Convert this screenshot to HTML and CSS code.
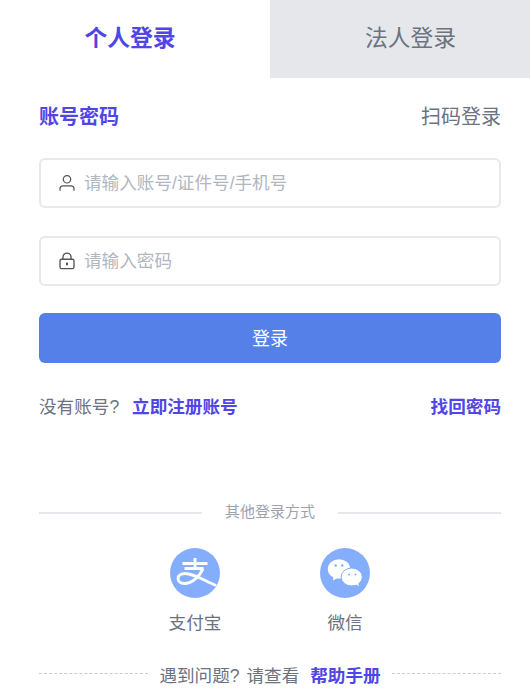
FILE: index.html
```html
<!DOCTYPE html>
<html lang="zh-CN">
  <head>
    <meta charset="UTF-8" />
    <meta name="viewport" content="width=device-width, initial-scale=1.0" />
    <title>登录</title>
    <link rel="stylesheet" href="styles.css">
  </head>
  <body>
    <div class="login-box">
      <!-- 登录类型 -->
      <div class="tabs">
        <div class="tab tab-active">个人登录</div>
        <div class="tab tab-other">法人登录</div>
      </div>

      <div class="login-body">
        <div class="mode-row">
          <span class="mode-active">账号密码</span>
          <span class="mode-other">扫码登录</span>
        </div>

        <div class="field">
          <svg class="field-icon" viewBox="0 0 16 16" fill="none" stroke="#555" stroke-width="1.1">
            <circle cx="8" cy="4.700" r="3.300" />
            <path d="M1.800 14.800v-1.600c0-1.500 1.200-2.600 2.700-2.600h7c1.500 0 2.700 1.100 2.700 2.600v1.600" />
          </svg>
          <span class="placeholder">请输入账号/证件号/手机号</span>
        </div>
        <div class="field">
          <svg class="field-icon" viewBox="0 0 16 16" fill="none" stroke="#555" stroke-width="1.200">
            <rect x="1.800" y="6.400" width="12.400" height="8.400" rx="1.400" />
            <path d="M4.400 6.400V4.600a3.600 3.600 0 0 1 7.200 0v1.800" />
            <path d="M8 9.400v2.400" stroke-width="1.800" />
          </svg>
          <span class="placeholder">请输入密码</span>
        </div>

        <button class="login-btn">登录</button>

        <div class="links">
          <span class="no-account">没有账号? <a class="link register-link">立即注册账号</a></span>
          <a class="link">找回密码</a>
        </div>

        <div class="other-title">
          <span class="line"></span>
          <span>其他登录方式</span>
          <span class="line"></span>
        </div>

        <div class="other-list">
          <div class="other-item">
            <svg class="other-icon" viewBox="0 0 50 50">
              <defs>
                <clipPath id="alipayClip">
                  <circle cx="25" cy="25" r="25" />
                </clipPath>
              </defs>
              <circle cx="25" cy="25" r="25" fill="#84aefb" />
              <g clip-path="url(#alipayClip)" fill="none" stroke="#fff" stroke-width="2.900">
                <path d="M12.500 15.500h25M25 10v10.500M14.500 20.500h19" />
                <path d="M33 20.500C30 28 22 35.500 14.500 35.500 10 35.500 8 33 8 30.500 8 27.500 11 25.500 15 25.500 24 25.500 33 32 46 37.500" />
              </g>
            </svg>
            <span>支付宝</span>
          </div>
          <div class="other-item">
            <svg class="other-icon" viewBox="0 0 50 50">
              <circle cx="25" cy="25" r="25" fill="#84aefb" />
              <ellipse cx="19" cy="21" rx="11.200" ry="9.800" fill="#fff" />
              <path d="M13 28l.3 4.500 4.500-2.800z" fill="#fff" />
              <ellipse cx="31.700" cy="29" rx="10.600" ry="9" fill="#fff" stroke="#84aefb" stroke-width="1" />
              <path d="M36 36l2.500 2.500-.2-4z" fill="#fff" />
              <circle cx="15.700" cy="17.500" r="1.200" fill="#84aefb" />
              <circle cx="22.300" cy="17.500" r="1.200" fill="#84aefb" />
              <circle cx="29" cy="26.500" r="1" fill="#84aefb" />
              <circle cx="35.500" cy="26.500" r="1" fill="#84aefb" />
            </svg>
            <span>微信</span>
          </div>
        </div>

        <div class="help">
          <span class="dash"></span>
          <span class="help-text">遇到问题? 请查看</span>
          <a class="link">帮助手册</a>
          <span class="dash"></span>
        </div>
      </div>
    </div>
  </body>
</html>
```

FILE: styles.css
```css
* {
  margin: 0;
  padding: 0;
  box-sizing: border-box;
}

body {
  background-color: #fff;
  font-family: "Liberation Sans", "Noto Sans CJK SC", sans-serif;
  color: #6b7280;
  overflow: hidden;
}

.login-box {
  width: 530px;
  height: 696px;
}

/* 登录类型 */
.tabs {
  display: grid;
  grid-template-columns: 270px 260px;
  height: 78px;
}

.tab {
  font-size: 22.800px;
  line-height: 77px;
  text-align: center;
}

.tab-active {
  padding-right: 10px;
  color: #4f46e5;
  font-weight: 700;
}

.tab-other {
  padding-left: 21px;
  background-color: #e5e7eb;
}

.login-body {
  padding: 0 29px 0 39px;
}

.mode-row {
  display: flex;
  justify-content: space-between;
  align-items: center;
  height: 30px;
  margin-top: 22px;
  font-size: 20px;
}

.mode-active {
  color: #4f46e5;
  font-weight: 700;
}

/* 输入框 */
.field {
  display: flex;
  align-items: center;
  gap: 8px;
  height: 50px;
  margin-top: 28px;
  padding-left: 17px;
  border: 2px solid #e5e8ef;
  border-radius: 6px;
}

.field-icon {
  width: 18px;
  height: 18px;
}

.placeholder {
  padding-bottom: 3px;
  font-size: 17.600px;
  color: #b2b6bf;
}

.login-btn {
  display: block;
  width: 100%;
  height: 50px;
  margin-top: 27px;
  padding-bottom: 3px;
  border: none;
  border-radius: 6px;
  background-color: #5580e8;
  color: #fff;
  font-family: inherit;
  font-size: 18px;
}

.links {
  display: flex;
  justify-content: space-between;
  align-items: center;
  margin-top: 30px;
  font-size: 17.600px;
  line-height: 28px;
}

.link {
  color: #4f46e5;
  font-weight: 700;
}

.register-link {
  margin-left: 8px;
}

/* 其他登录方式 */
.other-title {
  display: flex;
  align-items: center;
  gap: 23px;
  margin-top: 81px;
  font-size: 15px;
  line-height: 20px;
  color: #9ca3af;
}

.line {
  flex: 1;
  height: 2px;
  margin-top: 2px;
  background-color: #e5e7eb;
}

.other-list {
  display: flex;
  justify-content: center;
  gap: 100px;
  margin-top: 26px;
}

.other-item {
  display: flex;
  flex-direction: column;
  align-items: center;
  gap: 12px;
  width: 50px;
  font-size: 17.600px;
  line-height: 26px;
  white-space: nowrap;
}

.other-icon {
  width: 50px;
  height: 50px;
}

.help {
  display: flex;
  align-items: center;
  gap: 11px;
  margin-top: 27px;
  font-size: 17.600px;
  line-height: 26px;
}

.help-text {
  word-spacing: 2px;
}

.dash {
  flex: 1;
  margin-bottom: 6px;
  border-top: 1px dashed #ccc;
}
```
